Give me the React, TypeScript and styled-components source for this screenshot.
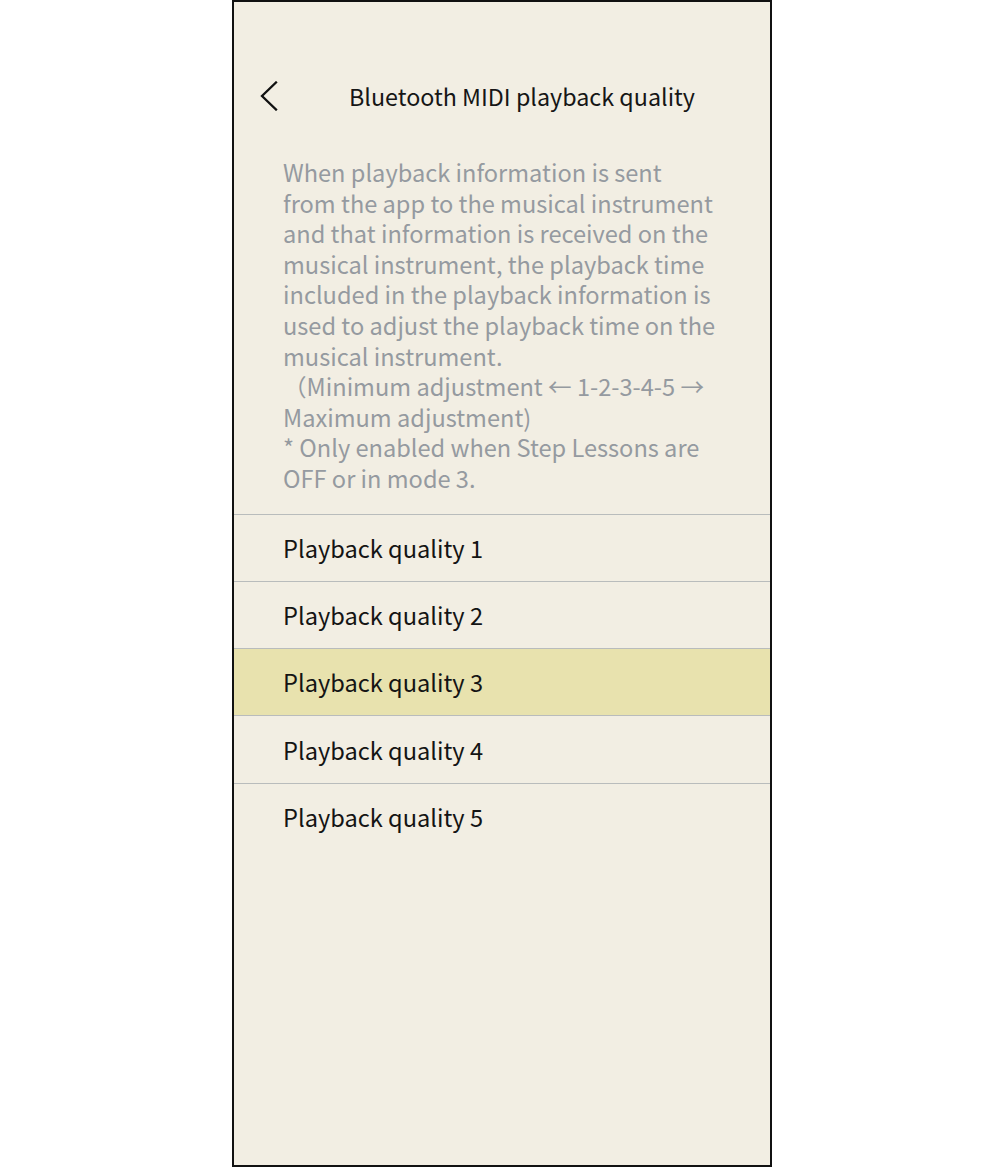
import React from "react";
import styled, { createGlobalStyle } from "styled-components";

const Global = createGlobalStyle`
  html, body { margin: 0; padding: 0; background: #ffffff; }
  body { font-family: "Noto Sans CJK JP", "Noto Sans", sans-serif; }
`;

const Frame = styled.div`
  box-sizing: border-box;
  width: 540px;
  height: 1167px;
  margin-left: 232px;
  border: 2px solid #111111;
  background: #f2eee3;
  display: flex;
  flex-direction: column;
`;

const Header = styled.header`
  display: flex;
  align-items: center;
  height: 50px;
  margin-top: 69px;
  padding-left: 23px;
`;

const BackButton = styled.button`
  display: flex;
  align-items: center;
  justify-content: center;
  width: 24px;
  height: 34px;
  padding: 0;
  border: none;
  background: transparent;
  cursor: pointer;
`;

const Title = styled.h1`
  margin: 0 0 0 68px;
  font-size: 23.3px;
  font-weight: 400;
  color: #161616;
`;

const Description = styled.p`
  margin: 36px 0 0;
  padding: 0 30px 20px 49px;
  font-size: 23.6px;
  font-weight: 400;
  line-height: 30.6px;
  color: #959aa0;
  white-space: pre-line;
`;

const List = styled.ul`
  list-style: none;
  margin: 0;
  padding: 0;
  border-top: 1px solid #b9bcbc;
`;

const Item = styled.li<{ $selected?: boolean }>`
  box-sizing: border-box;
  height: 67.3px;
  display: flex;
  align-items: center;
  padding-left: 49px;
  font-size: 23.6px;
  font-weight: 400;
  color: #141414;
  background: ${(p) => (p.$selected ? "#e8e2ae" : "transparent")};
  border-bottom: 1px solid #b9bcbc;
  &:last-child { border-bottom: none; }
`;

const Chevron = () => (
  <svg width="20" height="30" viewBox="0 0 20 30" fill="none">
    <path d="M17 1.5 L3 15 L17 28.5" stroke="#111" strokeWidth="2.3" strokeLinecap="square" />
  </svg>
);

const description = [
  "When playback information is sent",
  "from the app to the musical instrument",
  "and that information is received on the",
  "musical instrument, the playback time",
  "included in the playback information is",
  "used to adjust the playback time on the",
  "musical instrument.",
  "（Minimum adjustment ← 1-2-3-4-5 →",
  "Maximum adjustment)",
  "* Only enabled when Step Lessons are",
  "OFF or in mode 3.",
].join("\n");

export default function App() {
  const items = [1, 2, 3, 4, 5];
  return (
    <>
      <Global />
      <Frame>
        <Header>
          <BackButton aria-label="Back">
            <Chevron />
          </BackButton>
          <Title>Bluetooth MIDI playback quality</Title>
        </Header>
        <Description>{description}</Description>
        <List>
          {items.map((n) => (
            <Item key={n} $selected={n === 3}>
              Playback quality {n}
            </Item>
          ))}
        </List>
      </Frame>
    </>
  );
}
